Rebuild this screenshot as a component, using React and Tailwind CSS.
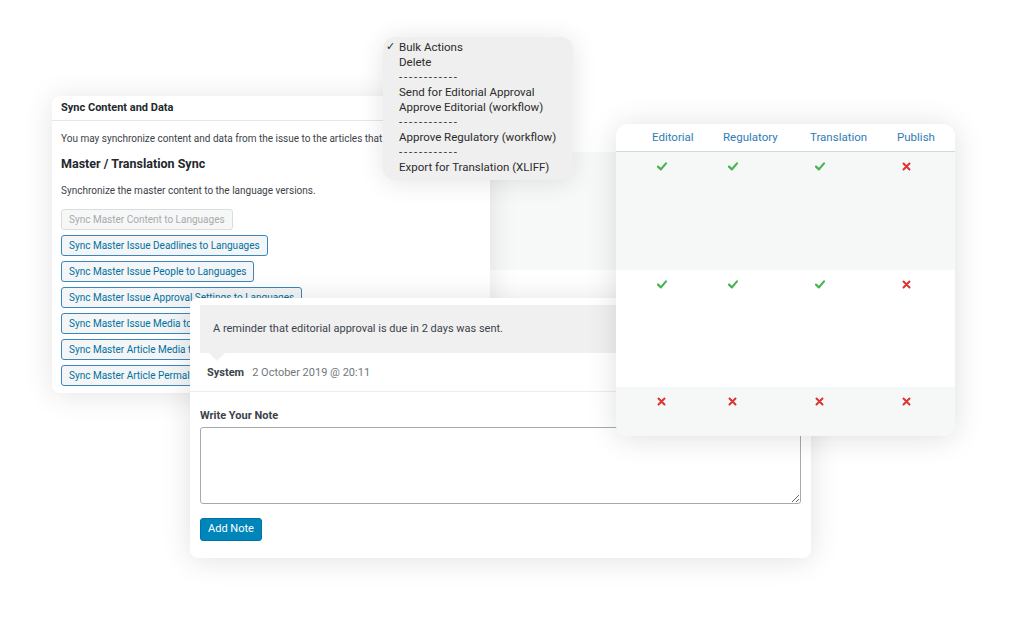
import React from 'react';

const Check = () => (
    <svg width="10" height="9" viewBox="0 0 10 9" className="block">
        <path d="M1 4.6 L3.9 7.4 L9 1.4" fill="none" stroke="#46b450" strokeWidth="2.2" strokeLinecap="round" strokeLinejoin="round" />
    </svg>
);

const Cross = () => (
    <svg width="9" height="9" viewBox="0 0 9 9" className="block">
        <path d="M1.5 1.5 L7.5 7.5 M7.5 1.5 L1.5 7.5" fill="none" stroke="#dc3232" strokeWidth="2" strokeLinecap="round" />
    </svg>
);

const syncButtons = [
    'Sync Master Issue Deadlines to Languages',
    'Sync Master Issue People to Languages',
    'Sync Master Issue Approval Settings to Languages',
    'Sync Master Issue Media to Languages',
    'Sync Master Article Media to Languages',
    'Sync Master Article Permalinks to Languages',
];

const bulkItems = [
    { label: 'Bulk Actions', checked: true },
    { label: 'Delete' },
    { label: '------------', dash: true },
    { label: 'Send for Editorial Approval' },
    { label: 'Approve Editorial (workflow)' },
    { label: '------------', dash: true },
    { label: 'Approve Regulatory (workflow)' },
    { label: '------------', dash: true },
    { label: 'Export for Translation (XLIFF)' },
];

// true = approved, false = not approved
const rows = [
    { cells: [true, true, true, false], bg: 'bg-[#f6f7f7]', h: 'h-[118px]' },
    { cells: [true, true, true, false], bg: 'bg-white', h: 'h-[117px]' },
    { cells: [false, false, false, false], bg: 'bg-[#f6f7f7]', h: 'flex-1' },
];

const colWidths = ['w-[71px]', 'w-[87px]', 'w-[87px]', 'w-[58px]'];

export default function App() {
    return (
        <div className="relative w-[1024px] h-[637px] bg-white overflow-hidden font-['Roboto','Liberation_Sans',sans-serif] text-[#3c434a]">

            {/* background panel peeking between the cards */}
            <div className="absolute left-[440px] top-[125px] w-[176px] h-[175px] bg-white">
                <div className="mt-[27px] h-[118px] bg-[#f7f8f8]"></div>
            </div>

            {/* Sync Content and Data */}
            <div className="absolute left-[52px] top-[96px] w-[438px] h-[297px] bg-white rounded-lg shadow-[0_2px_30px_rgba(0,0,0,0.11)] overflow-hidden">
                <div className="h-[25px] border-b border-[#e6e6e6] px-[9px] flex items-center text-[11px] font-bold text-[#23282d]">
                    Sync Content and Data
                </div>
                <div className="px-[9px] pt-[10px]">
                    <p className="text-[10px] leading-[15px] whitespace-nowrap">You may synchronize content and data from the issue to the articles that belong to this issue.</p>
                    <h2 className="mt-[8px] text-[12.5px] leading-[20px] font-bold text-[#23282d]">Master / Translation Sync</h2>
                    <p className="mt-[9px] text-[10px] leading-[15px]">Synchronize the master content to the language versions.</p>
                    <div className="mt-[11px] flex flex-col items-start gap-[5px]">
                        <button className="h-[21px] px-[7px] text-[10px] border border-[#dcdcde] rounded-[3px] bg-[#f6f7f7] text-[#a7aaad]">
                            Sync Master Content to Languages
                        </button>
                        {syncButtons.map((label) => (
                            <button key={label} className="h-[21px] px-[7px] text-[10px] border border-[#3a87c0] rounded-[3px] bg-[#f3f5f6] text-[#0071a1] whitespace-nowrap">
                                {label}
                            </button>
                        ))}
                    </div>
                </div>
            </div>

            {/* Bulk actions dropdown */}
            <div className="absolute left-[383px] top-[37px] w-[190px] h-[143px] rounded-[12px] bg-[#efefef] shadow-[0_2px_26px_rgba(0,0,0,0.11)] pt-[3px] pl-[3px]">
                {bulkItems.map((item, i) => (
                    <div key={i} className="flex items-center h-[15px] text-[11.5px] text-[#2c2c2c] whitespace-nowrap">
                        <span className="w-[13px] text-[11px]">{item.checked ? '✓' : ''}</span>
                        <span className={item.dash ? 'tracking-[1.8px]' : ''}>{item.label}</span>
                    </div>
                ))}
            </div>

            {/* Note card */}
            <div className="absolute left-[190px] top-[298px] w-[621px] h-[260px] bg-white rounded-lg shadow-[0_2px_30px_rgba(0,0,0,0.12)]">
                <div className="px-[10px] pt-[7px]">
                    <div className="relative h-[48px] bg-[#f0f0f1] flex items-center pl-[13px] text-[11px]">
                        A reminder that editorial approval is due in 2 days was sent.
                        <span className="absolute left-[9px] top-full w-0 h-0 border-l-[8px] border-r-[8px] border-t-[8px] border-l-transparent border-r-transparent border-t-[#f0f0f1]"></span>
                    </div>
                    <div className="mt-[12px] h-[16px] pl-[7px] flex items-center text-[11px]">
                        <span className="font-bold text-[#3c434a]">System</span>
                        <span className="ml-[8px] text-[#72777c]">2 October 2019 @ 20:11</span>
                    </div>
                </div>
                <div className="mt-[10px] border-t border-[#ececec] px-[10px] pt-[16px]">
                    <div className="text-[11px] leading-[15px] font-bold text-[#3c434a]">Write Your Note</div>
                    <textarea className="mt-[4px] block w-[601px] h-[77px] border border-[#a7aaad] rounded-[3px] bg-white"></textarea>
                    <button className="mt-[14px] h-[23px] w-[62px] rounded-[3px] bg-[#0085ba] border border-[#0073aa] text-white text-[11px]">
                        Add Note
                    </button>
                </div>
            </div>

            {/* Approval table */}
            <div className="absolute left-[616px] top-[124px] w-[339px] h-[312px] bg-white rounded-[12px] shadow-[0_2px_30px_rgba(0,0,0,0.13)] overflow-hidden flex flex-col">
                <div className="h-[28px] shrink-0 border-b border-[#d0dae2] flex items-center pl-[36px] text-[11.5px] text-[#2e7db5]">
                    {['Editorial', 'Regulatory', 'Translation', 'Publish'].map((h, i) => (
                        <div key={h} className={colWidths[i]}>{h}</div>
                    ))}
                </div>
                {rows.map((row, r) => (
                    <div key={r} className={`${row.h} ${row.bg} shrink-0 flex items-start pl-[36px] pt-[10px]`}>
                        {row.cells.map((ok, i) => (
                            <div key={i} className={`${colWidths[i]} pl-[5px]`}>
                                {ok ? <Check /> : <Cross />}
                            </div>
                        ))}
                    </div>
                ))}
            </div>
        </div>
    );
}
